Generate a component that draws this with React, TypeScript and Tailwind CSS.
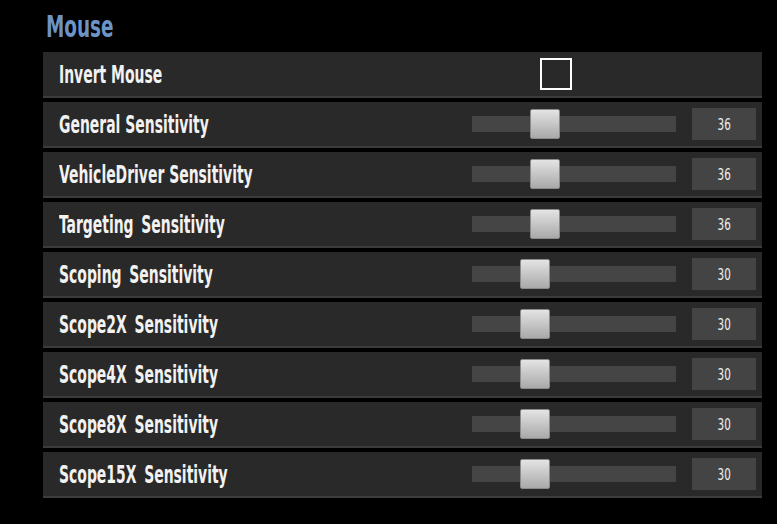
import React from "react";

type Row = { label: string; value: number };

// the wider gaps in some labels are a space plus a thin space
const sliders: Row[] = [
  { label: "General Sensitivity", value: 36 },
  { label: "VehicleDriver Sensitivity", value: 36 },
  { label: "Targeting \u2009Sensitivity", value: 36 },
  { label: "Scoping \u2009Sensitivity", value: 30 },
  { label: "Scope2X \u2009Sensitivity", value: 30 },
  { label: "Scope4X \u2009Sensitivity", value: 30 },
  { label: "Scope8X \u2009Sensitivity", value: 30 },
  { label: "Scope15X \u2009Sensitivity", value: 30 },
];

const font = { fontFamily: '"DejaVu Sans Condensed", "Liberation Sans", sans-serif' };

function Label({ children }: { children: string }) {
  return (
    <span className="mt-[3px] inline-block origin-left scale-x-[0.62] whitespace-pre text-[25px] font-bold leading-none text-[#f2f2f2]">
      {children}
    </span>
  );
}

function SliderRow({ label, value }: Row) {
  return (
    <div className="flex h-[46px] items-center border-b-2 border-[#3c3c3c] bg-[#292929] pl-4">
      <div className="w-[413px]">
        <Label>{label}</Label>
      </div>
      {/* TRACK */}
      <div className="relative h-4 w-[204px] bg-[#454545]">
        <div
          className="absolute -top-[7px] h-[30px] w-[30px] rounded-[2px] border border-[#8a8a8a] bg-gradient-to-b from-[#e4e4e4] to-[#a9a9a9]"
          style={{ left: Math.round(value * 1.6) }}
        />
      </div>
      <div className="ml-4 flex h-8 w-16 items-center justify-center bg-[#444444] text-[16px] text-[#f0f0f0]">
        <span className="mt-[1px] inline-block scale-x-[0.72]">{value}</span>
      </div>
    </div>
  );
}

export default function App() {
  return (
    <div className="h-[524px] w-[777px] bg-black pl-[43px] pt-[6px]" style={font}>
      <h1 className="mb-[6px] h-[40px] pl-[3px] text-[31px] font-bold leading-[40px] text-[#6d94c6]">
        <span className="inline-block origin-left scale-x-[0.66]">Mouse</span>
      </h1>
      <div className="flex w-[719px] flex-col gap-1">
        <div className="flex h-[46px] items-center border-b-2 border-[#3c3c3c] bg-[#292929] pl-4">
          <div className="w-[481px]">
            <Label>Invert Mouse</Label>
          </div>
          <div className="h-8 w-8 border-2 border-white" />
        </div>
        {sliders.map((s) => (
          <SliderRow key={s.label} {...s} />
        ))}
      </div>
    </div>
  );
}
